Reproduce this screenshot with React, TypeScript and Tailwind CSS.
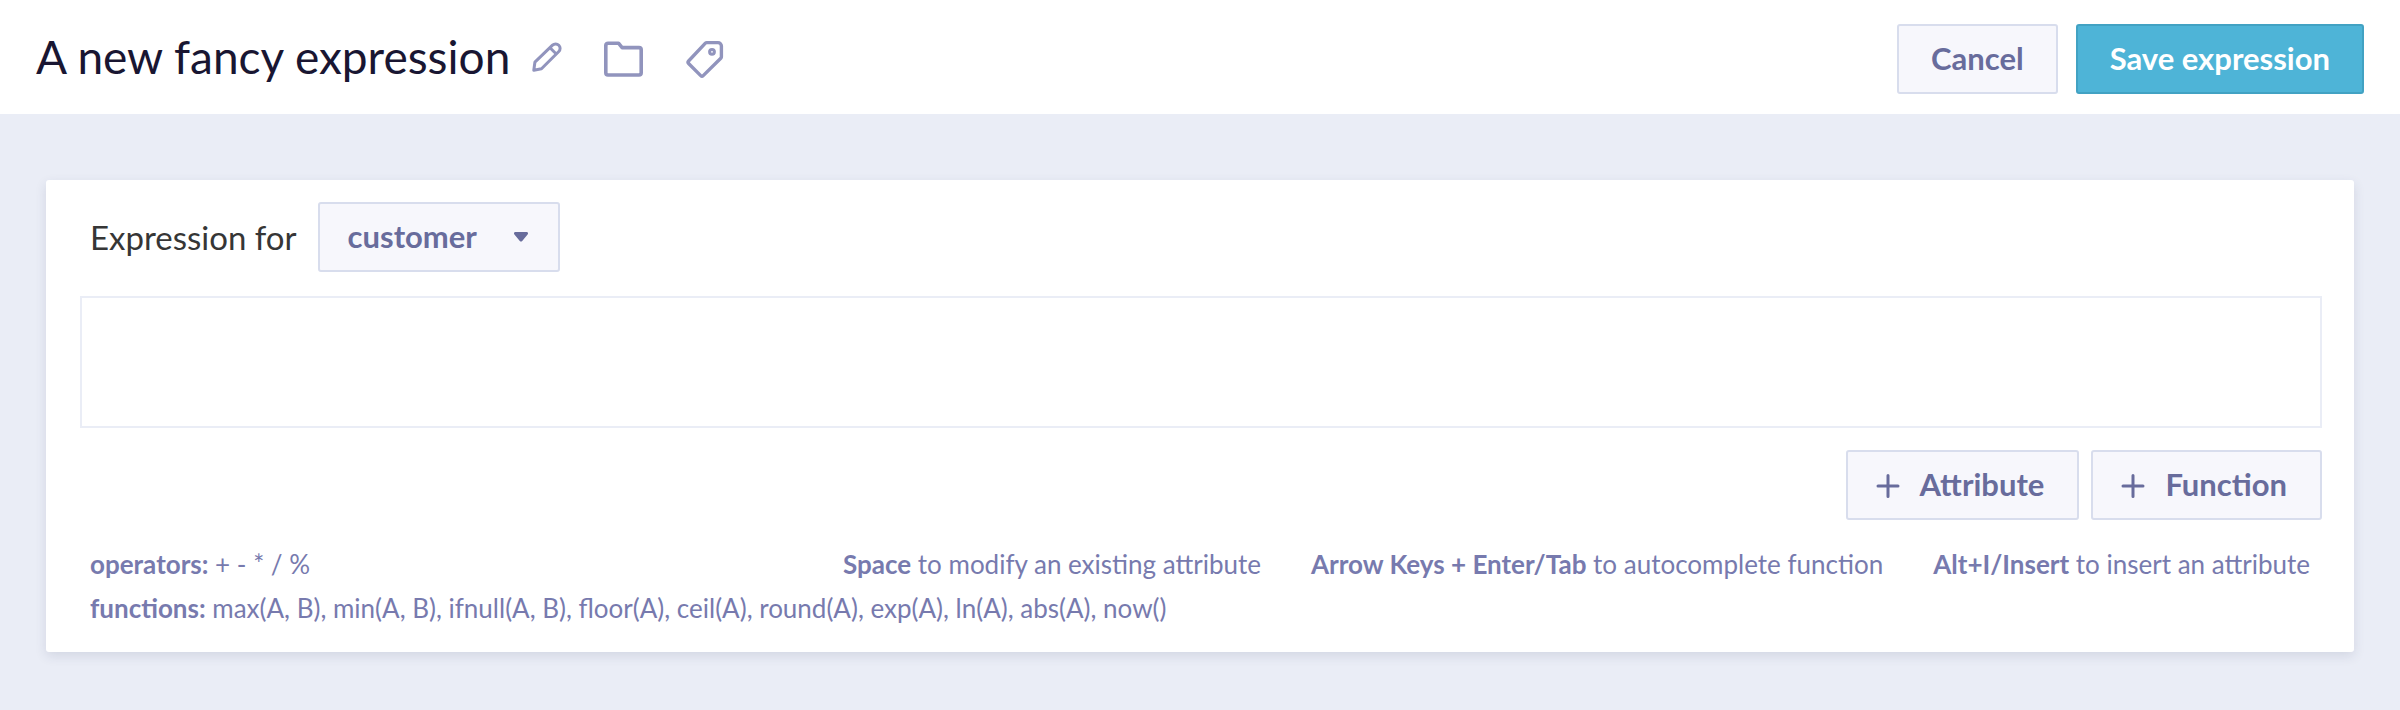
import { useState } from "react";
import type { ReactNode } from "react";

const entities = ["customer", "order", "product"];

const hints = [
    { keys: "Space", text: "to modify an existing attribute" },
    { keys: "Arrow Keys + Enter/Tab", text: "to autocomplete function" },
    { keys: "Alt+I/Insert", text: "to insert an attribute" },
];

const secondaryButton =
    "h-[70px] rounded-[3px] border-2 border-[#d8dded] bg-[#f7f7fc] pb-0.5 text-[31px] font-bold text-[#686c9c] cursor-pointer";

function PencilIcon() {
    return (
        <svg width="30" height="30" viewBox="0 0 30 30" fill="none" stroke="currentColor" strokeWidth="3" strokeLinejoin="round">
            <path d="M1.8 28.2 2.9 20.2 20.5 3.2a4.4 4.4 0 0 1 6.3 6.3L9.5 26.8Z" />
            <path d="m18 5.7 6.3 6.3" />
        </svg>
    );
}

function FolderIcon() {
    return (
        <svg width="40" height="36" viewBox="0 0 40 36" fill="none" stroke="currentColor" strokeWidth="3.6" strokeLinejoin="round">
            <path d="M4 2.2h10.5l3.6 4.4H35a2.2 2.2 0 0 1 2.2 2.2v23a2.2 2.2 0 0 1-2.2 2.2H4a2.2 2.2 0 0 1-2.2-2.2V4.4A2.2 2.2 0 0 1 4 2.2Z" />
        </svg>
    );
}

function TagIcon() {
    return (
        <svg width="38" height="38" viewBox="0 0 38 38" fill="none" stroke="currentColor" strokeWidth="3.4" strokeLinejoin="round">
            <path d="M20.8 2.6H32a3.4 3.4 0 0 1 3.4 3.4v10.8a2 2 0 0 1-.6 1.4L17.2 35.6a1.8 1.8 0 0 1-2.5 0L2.6 23.5a1.8 1.8 0 0 1 0-2.5L19.4 3.2A2 2 0 0 1 20.8 2.6Z" />
            <circle cx="26" cy="11.8" r="2.4" strokeWidth="3" />
        </svg>
    );
}

function PlusIcon() {
    return (
        <svg className="mt-1" width="24" height="24" viewBox="0 0 24 24" fill="none" stroke="currentColor" strokeWidth="3" strokeLinecap="round">
            <path d="M12 1.5v21M2 12h20" />
        </svg>
    );
}

function IconButton({ label, children }: { label: string; children: ReactNode }) {
    return (
        <button type="button" aria-label={label} className="cursor-pointer text-[#9194bd]">
            {children}
        </button>
    );
}

function AddButton({ children }: { children: ReactNode }) {
    return (
        <button type="button" className={`${secondaryButton} flex items-center gap-5 pl-7 pr-[33px]`}>
            <PlusIcon />
            {children}
        </button>
    );
}

export default function App() {
    const [entity, setEntity] = useState("customer");
    const [expression, setExpression] = useState("");

    return (
        <div className="min-h-screen bg-[#eaedf6] font-['Lato',sans-serif]">
            {/* Header */}
            <header className="flex h-[114px] items-center justify-between bg-white px-9 pt-1">
                <div className="flex items-center gap-[42px]">
                    <div className="flex items-center gap-[22px] pb-1">
                        <h1 className="text-[46px] leading-[60px] text-[#191632]">A new fancy expression</h1>
                        <IconButton label="Rename">
                            <PencilIcon />
                        </IconButton>
                    </div>
                    <IconButton label="Move to folder">
                        <FolderIcon />
                    </IconButton>
                    <IconButton label="Edit tags">
                        <TagIcon />
                    </IconButton>
                </div>
                <div className="flex gap-[18px]">
                    <button type="button" className={`${secondaryButton} px-8`}>
                        Cancel
                    </button>
                    <button
                        type="button"
                        className="h-[70px] cursor-pointer rounded-[3px] border-2 border-[#42a2c3] bg-[#4eb4d7] px-8 pb-0.5 text-[31px] font-bold text-white"
                    >
                        Save expression
                    </button>
                </div>
            </header>

            {/* Expression editor */}
            <main className="px-[46px] py-[66px]">
                <section className="rounded-[3px] bg-white pt-[22px] pr-8 pb-[22px] pl-[34px] shadow-[0_4px_12px_rgba(40,50,90,0.12)]">
                    <div className="flex items-center gap-[21px] pl-2.5">
                        <label htmlFor="entity" className="pt-0.5 text-[33px] text-[#363636]">
                            Expression for
                        </label>
                        <div className="relative">
                            <select
                                id="entity"
                                value={entity}
                                onChange={(e) => setEntity(e.target.value)}
                                className={`${secondaryButton} w-[242px] appearance-none pl-7 pr-14`}
                            >
                                {entities.map((name) => (
                                    <option key={name}>{name}</option>
                                ))}
                            </select>
                            <svg
                                className="pointer-events-none absolute top-[30px] right-8 text-[#686c9c]"
                                width="14"
                                height="10"
                                viewBox="0 0 14 10"
                                fill="currentColor"
                            >
                                <path d="M1.5 0h11A1.4 1.4 0 0 1 13.6 2.4L8.2 8.9a1.6 1.6 0 0 1-2.4 0L.4 2.4A1.4 1.4 0 0 1 1.5 0Z" />
                            </svg>
                        </div>
                    </div>

                    <textarea
                        aria-label="Expression"
                        value={expression}
                        onChange={(e) => setExpression(e.target.value)}
                        className="mt-6 block h-[132px] w-full resize-none border-2 border-[#eaedf6] p-4 text-[31px] text-[#363636] outline-none"
                    />

                    <div className="mt-[22px] flex justify-end gap-3">
                        <AddButton>Attribute</AddButton>
                        <AddButton>Function</AddButton>
                    </div>

                    <div className="mt-[22px] pr-3 pl-2.5 text-[26px] leading-[44px] text-[#777aae]">
                        <div className="flex justify-between">
                            <p>
                                <strong>operators:</strong> + - * / %
                            </p>
                            <ul className="flex gap-[50px]">
                                {hints.map((hint) => (
                                    <li key={hint.keys}>
                                        <strong>{hint.keys}</strong> {hint.text}
                                    </li>
                                ))}
                            </ul>
                        </div>
                        <p>
                            <strong>functions:</strong> max(A, B), min(A, B), ifnull(A, B), floor(A), ceil(A), round(A),
                            exp(A), ln(A), abs(A), now()
                        </p>
                    </div>
                </section>
            </main>
        </div>
    );
}
